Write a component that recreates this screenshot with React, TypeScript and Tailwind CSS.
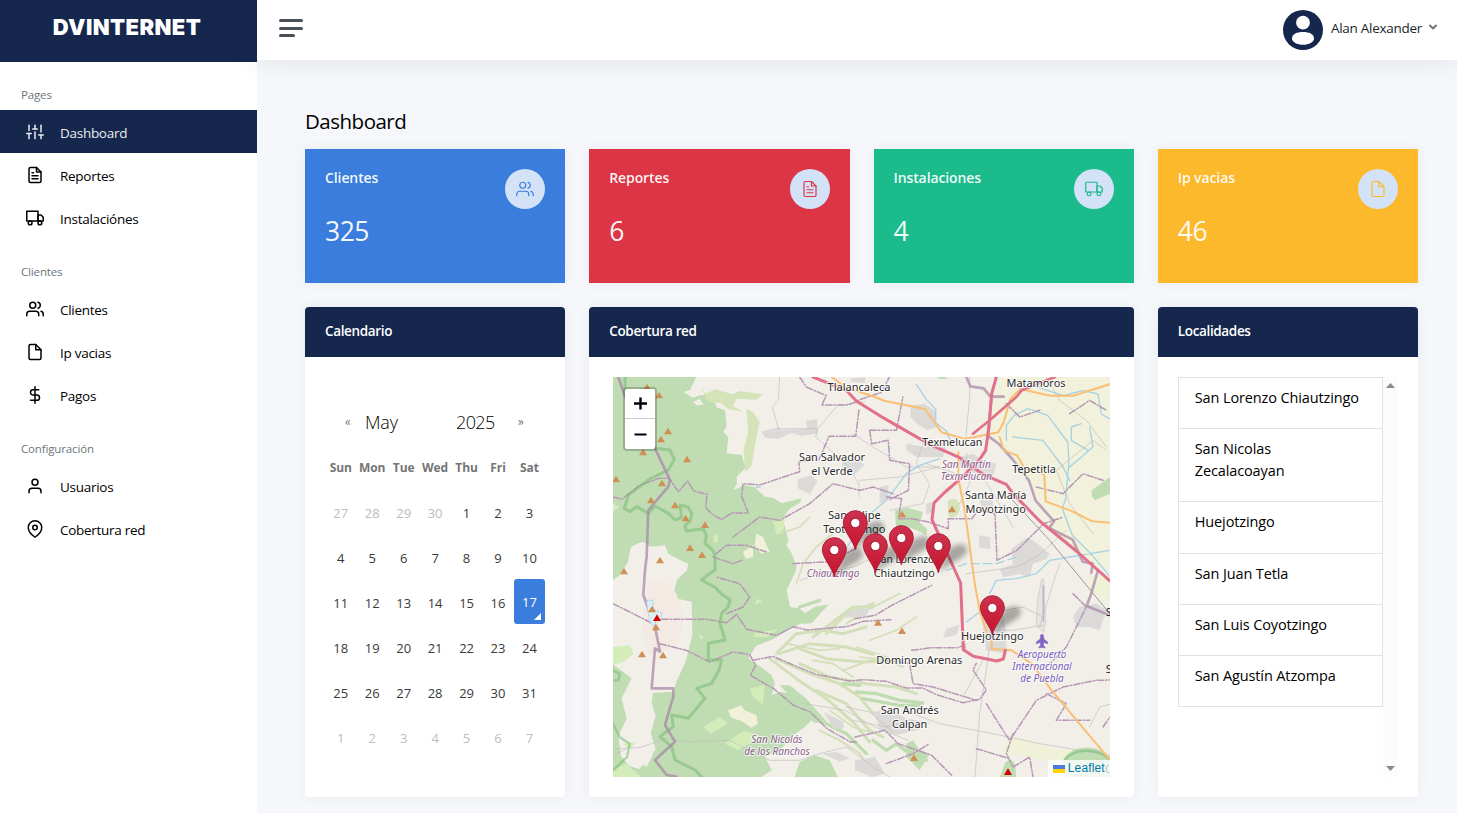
import type { ReactNode } from 'react';
import type { IconType } from 'react-icons';
import {
  FiChevronDown,
  FiDollarSign,
  FiFile,
  FiFileText,
  FiMapPin,
  FiSliders,
  FiTruck,
  FiUser,
  FiUsers,
} from 'react-icons/fi';

type NavItem = { label: string; icon: IconType; active?: boolean };

const NAV: { title: string; items: NavItem[] }[] = [
  {
    title: 'Pages',
    items: [
      { label: 'Dashboard', icon: FiSliders, active: true },
      { label: 'Reportes', icon: FiFileText },
      { label: 'Instalaciónes', icon: FiTruck },
    ],
  },
  {
    title: 'Clientes',
    items: [
      { label: 'Clientes', icon: FiUsers },
      { label: 'Ip vacias', icon: FiFile },
      { label: 'Pagos', icon: FiDollarSign },
    ],
  },
  {
    title: 'Configuración',
    items: [
      { label: 'Usuarios', icon: FiUser },
      { label: 'Cobertura red', icon: FiMapPin },
    ],
  },
];

const STATS = [
  { label: 'Clientes', value: '325', icon: FiUsers, bg: 'bg-[#3b7ddd]', fg: 'text-[#3b7ddd]' },
  { label: 'Reportes', value: '6', icon: FiFileText, bg: 'bg-[#dc3545]', fg: 'text-[#dc3545]' },
  { label: 'Instalaciones', value: '4', icon: FiTruck, bg: 'bg-[#1cbb8c]', fg: 'text-[#1cbb8c]' },
  { label: 'Ip vacias', value: '46', icon: FiFile, bg: 'bg-[#fcb92c]', fg: 'text-[#fcb92c]' },
];

const PLACES = [
  'San Lorenzo Chiautzingo',
  'San Nicolas Zecalacoayan',
  'Huejotzingo',
  'San Juan Tetla',
  'San Luis Coyotzingo',
  'San Agustín Atzompa',
];

const WEEKDAYS = ['Sun', 'Mon', 'Tue', 'Wed', 'Thu', 'Fri', 'Sat'];

const DAYS = Array.from({ length: 42 }, (_, i) => {
  const n = i - 3;
  if (n < 1) return { n: n + 30, out: true };
  if (n > 31) return { n: n - 31, out: true };
  return { n, out: false };
});

function Sidebar() {
  return (
    <aside className="flex w-[257px] shrink-0 flex-col bg-white">
      <div className="flex h-[62px] justify-center bg-[#15274d] pt-[13px] pr-[3px]">
        <span className="font-['Inter'] text-[22px] leading-[28px] font-black tracking-[0.4px] text-white">
          DVINTERNET
        </span>
      </div>
      {NAV.map((group) => (
        <nav key={group.title}>
          <div className="h-12 pt-[24px] pl-[21px] text-[11.5px] leading-[18px] tracking-[-0.15px] text-[#6c757d]">
            {group.title}
          </div>
          {group.items.map(({ label, icon: Icon, active }) => (
            <a
              key={label}
              className={
                active
                  ? 'flex h-[43px] items-center bg-[#15274d] pl-[26px] text-[#e9ecef]'
                  : 'flex h-[43px] items-center pl-[26px] text-black'
              }
            >
              <Icon className="size-[18px]" strokeWidth={2} />
              <span className="pt-[3px] pl-[16px] text-[13.5px] leading-5 tracking-[-0.28px]">{label}</span>
            </a>
          ))}
        </nav>
      ))}
    </aside>
  );
}

function TopBar() {
  return (
    <header className="relative flex h-[60px] shrink-0 items-center justify-between bg-white pr-[18px] pl-[22px] shadow-[0_0_28px_0_rgba(33,37,41,0.1)]">
      <div className="flex flex-col gap-[4.5px] pb-[4px]">
        <span className="h-[3px] w-6 rounded-sm bg-[#495057]" />
        <span className="h-[3px] w-6 rounded-sm bg-[#495057]" />
        <span className="h-[3px] w-4 rounded-sm bg-[#495057]" />
      </div>
      <div className="flex items-center">
        <svg className="size-10" viewBox="0 0 40 40">
          <circle cx="20" cy="20" r="20" fill="#15274d" />
          <circle cx="20" cy="12.7" r="6.9" fill="#fff" />
          <path d="M9 28.5C9 24 14 22 20 22s11 2 11 6.5C31 32 26 34.8 20 34.8S9 32 9 28.5Z" fill="#fff" />
        </svg>
        <span className="pb-[5px] pl-2 text-[13.5px] leading-5 tracking-[-0.28px] text-[#212529]">Alan Alexander</span>
        <FiChevronDown className="mb-[6px] ml-[5px] size-[12px] text-[#6c757d]" strokeWidth={4} />
      </div>
    </header>
  );
}

function Panel({ title, className, children }: { title: string; className: string; children: ReactNode }) {
  return (
    <section className={`flex h-[490px] flex-col rounded bg-white shadow-[0_0_14px_0_rgba(33,37,41,0.05)] ${className}`}>
      <h2 className="h-[50px] rounded-t bg-[#15274d] px-5 pt-[14px] text-[13.5px] leading-5 font-semibold tracking-[-0.35px] text-white">
        {title}
      </h2>
      {children}
    </section>
  );
}

function Calendar() {
  return (
    <div className="px-5 pt-[49px]">
      <div className="flex h-8 items-center text-[#212529]">
        <span className="w-10 pl-[20px] text-[13px] font-light">«</span>
        <span className="w-[91px] text-[18px] tracking-[-0.2px] font-light text-black">May</span>
        <span className="w-[62px] text-[18px] font-light tracking-[-0.6px] text-black">2025</span>
        <span className="text-[13px] font-light">»</span>
      </div>
      <div className="grid grid-cols-7 pt-[6px] text-center">
        {WEEKDAYS.map((d) => (
          <span key={d} className="h-[45px] text-[12px] leading-[47px] font-bold tracking-[-0.1px] text-[#757575]">
            {d}
          </span>
        ))}
        {DAYS.map(({ n, out }, i) =>
          n === 17 ? (
            <span key={i} className="relative h-[45px] rounded-[3px] bg-[#3b7ddd] text-[13px] leading-[46px] text-white">
              {n}
              <svg className="absolute right-1 bottom-1 size-[7px]" viewBox="0 0 7 7">
                <path d="M7 0v7H0z" fill="#fff" />
              </svg>
            </span>
          ) : (
            <span
              key={i}
              className={
                out
                  ? 'h-[45px] text-[13px] leading-[49px] text-[#bdbdbd]'
                  : 'h-[45px] text-[13px] leading-[49px] text-[#393939]'
              }
            >
              {n}
            </span>
          ),
        )}
      </div>
    </div>
  );
}

const PEAKS: [number, number][] = [
  [102, 30], [138, 54], [165, 162], [144, 186], [90, 225], [222, 246], [9, 306], [147, 318], [114, 369],
  [186, 384], [218, 423], [276, 443], [231, 512], [267, 533], [141, 549], [33, 582], [117, 696], [129, 750],
  [87, 831], [150, 834], [867, 411], [1017, 396], [795, 736], [867, 761], [903, 1142],
];

const LABELS: { t: string; x: number; y: number; w: number; kind?: 'area' | 'air' }[] = [
  { t: 'Tlalancaleca', x: 738, y: 42, w: 189 },
  { t: 'Matamoros', x: 1269, y: 30, w: 177 },
  { t: 'Texmelucan', x: 1018, y: 206, w: 180 },
  { t: 'San Salvador', x: 657, y: 251, w: 198 },
  { t: 'el Verde', x: 657, y: 293, w: 124 },
  { t: 'Tepetitla', x: 1263, y: 287, w: 131 },
  { t: 'San Martín', x: 1060, y: 273, w: 146, kind: 'area' },
  { t: 'Texmelucan', x: 1060, y: 308, w: 154, kind: 'area' },
  { t: 'Santa María', x: 1148, y: 366, w: 184 },
  { t: 'Moyotzingo', x: 1148, y: 408, w: 181 },
  { t: 'San Felipe', x: 724, y: 426, w: 158 },
  { t: 'Teotlalcingo', x: 724, y: 468, w: 187 },
  { t: 'San Lorenzo', x: 875, y: 558, w: 178 },
  { t: 'Chiautzingo', x: 874, y: 600, w: 184 },
  { t: 'Chiautzingo', x: 660, y: 600, w: 158, kind: 'area' },
  { t: 'Huejotzingo', x: 1138, y: 788, w: 188 },
  { t: 'Domingo Arenas', x: 919, y: 862, w: 258 },
  { t: 'San Andrés', x: 890, y: 1011, w: 174 },
  { t: 'Calpan', x: 890, y: 1053, w: 106 },
  { t: 'San Nicolás', x: 492, y: 1098, w: 154, kind: 'area' },
  { t: 'de los Ranchos', x: 492, y: 1134, w: 197, kind: 'area' },
  { t: 'Aeropuerto', x: 1287, y: 842, w: 146, kind: 'air' },
  { t: 'Internacional', x: 1287, y: 878, w: 178, kind: 'air' },
  { t: 'de Puebla', x: 1287, y: 914, w: 130, kind: 'air' },
];

const MARKERS: [number, number][] = [
  [727, 519], [865, 564], [787, 588], [976, 588], [664, 600], [1138, 774],
];

function Terrain() {
  return (
    <>
      <rect width="1491" height="1200" fill="#f2efe9" />
      {/* farmland in the east */}
      <path d="M1160 0h331v580l-25-12-42-5-47-64-70-35-11-35-26-40-10-55-35-55-55-75-40-20 5-60 10-70Z" fill="#f1f1dc" />
      <path d="M1430 595h61v80l-50-25-20-15ZM1180 1080l60 5 60 25 80 10 20 10-40 35-100-20-40-15-50 10Z" fill="#f0f1d9" />
      {/* forest */}
      <path
        d="M0 0H250L231 39L250 55L276 54L306 79L312 92L336 99L341 149L330 165L346 179L341 229L386 234L392 256L401 269L371 299L372 320L361 339L396 324L425 330L440 345L456 359L480 362L506 379L566 364L560 378L530 395L506 429L516 449L526 489L520 505L536 529L551 569L545 590L521 639L531 689L560 695L576 709L605 690L648 682L620 712L596 739L560 740L526 759L476 789L430 806L406 844L456 879L476 895L486 919L476 955L500 945L536 949L576 989L600 1025L576 1049L536 1079L500 1120L456 1139L476 1179L446 1200H0Z"
        fill="#c0dcb3"
      />
      <path d="M545 1200l15-45 45-20 45 15 25 50ZM500 925l30 0 50 40 40 45 30 35-50-10-60-70Z" fill="#c0dcb3" />
      {/* bare high slopes */}
      <path
        d="M92 494l20 15 44-4 10 25 36 20 24 10-4 20-30 28-8 30 12 28 40 8 2 100-20 80-28 60-8 30-62 4-4 30 12 40-15 50 15 48-20 30-30 30-30-10-24-30-8-60 25-50-15-62 30-60-20-15-40-30-32-40-4-30L0 640V610l20-15 24-38 10-48 22-10Z"
        fill="#f2efe9"
      />
      <path d="M66 1142l30-28 24 20-20 36Z" fill="#f2efe9" />
      <path d="M108 610c50-20 90 40 106 110-10 70-40 110-110 110-30-80-10-150 4-220Z" fill="#f2e6df" opacity=".6" />
      <path d="M212 45l30-10 20 18-22 10ZM240 75l20-10 12 18-20 2Z" fill="#f2efe9" />
      <path d="M266 34l12 16 30-14 50 16 22-10 70 10-20 16-60-3-10 22 30 18-46-10-20-16-40-5ZM400 95l20 10 20 30-14 70-10 60-20 20-4-70 14-50Z" fill="#d5e3b9" />
      <path d="M430 470l20 10 20 45-25 5-20-25ZM390 525l30-20 0 35-22 5ZM345 1000l40-15 10 15 35 15 5 25-20 12-30-20-30-10Z" fill="#f1f0d8" />
      <path d="M0 380l20 10-20 14ZM0 810l50-5 12 25-30 25-32 8ZM300 480l14-10 2 25-12 4ZM480 430l36-10-5 40-20 15ZM410 935l45-12-5 60-28-20ZM270 1050l50-30 25 18-50 32ZM335 1100l60-40 50 20-70 40ZM0 1180l40-20 45 40H0ZM425 770l70-15-30 25-45 0Z" fill="#d3ecba" />
      <path d="M30 1100l20 15 20-20ZM430 665l20 8-24 10ZM256 770l18 10-12 8Z" fill="#d3ecba" />
      {/* gullies fanning out from the volcano */}
      <g fill="none" stroke="#d3dfb8" strokeWidth="9" strokeLinecap="round" strokeLinejoin="round">
        <path d="M490 830l60-60 80-10 60 10 70-20M500 830l90-30 110 10 80 22M560 815l80 30 110 10 110-5M470 845l80 60 90 60 80 70 50 60M490 845l100 45 90 30 60 40 40 50M560 860l90 40 110 20 90 10 60 20M600 780l120-90 60 0M640 770l60-60 80-30M610 940l90 40 70 80 40 20" />
        <path d="M700 740l60-40 60-30 40-20M690 880l110-40 70 30M620 1060l60 30 60 40 30 40" strokeWidth="6" />
        <path d="M550 620l20-60 40-50 50-40M590 420l-30 30-60 20" strokeWidth="5" />
        <path d="M730 810l120 40M770 790l80-30 60-40M740 840l90 10M600 850l60 10 60 40M520 800l100 20 60-5M650 1000l70 50 50 15" strokeWidth="5" />
      </g>
      <g fill="none" stroke="#bfdcb1" strokeWidth="10" strokeLinecap="round">
        <path d="M730 945l60 5 70 20 70 8M750 965l110 20 60 0M780 1090l40 30 30-20 40 30 50 20M560 690l60-20M690 920l50 5M640 1040l60 30 60 60" />
      </g>
      {/* green patches */}
      <path d="M846 400l36-8 48 14-10 30 22 20-2 18-28-14-34-12-22 22-8-34ZM1436 340l55-40v50l-45 20-10-12ZM1350 1150c20-50 110-50 141-10v60h-120ZM1175 1160c10-16 26-16 32 6l2 34h-48ZM880 1100l20-10 20 30 30 10-30 50-40-40ZM975 0h26v6h-22Z" fill="#c0dcb3" />
      <path d="M1004 372c20-16 40 0 36 24s-24 30-34 20Z" fill="#d5e3b9" />
      {/* built-up areas */}
      <g fill="#dbdad8">
        <path d="M446 164l50-14 8 8 80-2-6-24 34-6 2 44-50 6-30-8-38 18-40-4ZM554 306l40-10 20 16-24 40-36-18ZM690 250l40-6 24 20-30 30-40-10ZM712 5l45-5v18l-40-3ZM894 85l40-5 30 20 8 50-30 10-30-20-20-20ZM880 200l60 10 60 0-10 30-80 0-30-20ZM1040 240l40-10 30 20 40 10-10 40-60-10-40-20ZM1100 370h40v20l-34 4ZM800 330l26-6v40l-26 16ZM940 380l16-6 6 30-22 10ZM1098 475l34 5v36l-34-4ZM1194 515l50-35 30 20 36 30-10 16-40 15-10 40-30-10-50 10-10-24 40-16Z" />
        <path d="M1000 755l40-12-10 30-40 10ZM1106 690l40-10 34 10-10 20 10 60 0 60-60-10-10-60ZM1400 690l50-10 30 20-20 60-30-10-40 0-10-30ZM780 1005l50-10 50 30 70 10-20 20-80 20-50-20-10-30ZM726 1150l60-10 30 50-40 10-50-20ZM632 1005l60 30 0 20-30 0ZM690 720l30-20 50-6-10 24-60 4ZM630 1130l40-6 40 20-30 10Z" />
      </g>
      <path d="M1270 726l4-60 12-60 6 0 6 130-6 30-22-20Z" fill="#e6e4e3" stroke="#c8c5c3" strokeWidth="2" />
      <path d="M1291 624v110" stroke="#bcb6d2" strokeWidth="5" />
    </>
  );
}

function Lines() {
  return (
    <g fill="none" strokeLinejoin="round" strokeLinecap="round">
      {/* water */}
      <g stroke="#a6d3e3" strokeWidth="4">
        <path d="M910 22l30 45 28 30 0 40 32 25 10 25M690 530l70-110 60-50 60-80 40-25 60-20M1180 190l0-45 24-30 40-20 60 20 60 80 4 60-10 110-10 30 30 80 60 60 50 60M1200 180l90 10 60 80 20 40M1260 26l90 30 60-15 45 10 10 60 26 15M1375 150l30-10M1430 150l10 60-70 60M1375 150l0 40 50 30M1130 650l20-40 60-5 60-15 40-40 60-10 120-20M1060 735l40-30" />
        <path d="M1000 580l60-20 90 0 60-20" strokeDasharray="26 12" />
        <path d="M430 330h12" />
      </g>
      {/* minor roads and rail */}
      <g stroke="#bfbebc" strokeWidth="2">
        <path d="M500 0l-4 70-18 20 18 65h118l-6 25 90 80 40 60 0 40M614 155l60-70 80-10M720 170l60 40 100 60 100 0M1070 0l0 60-12 130M740 310l120-10 120-30M930 200l-20 60 40 60-20 60-100 20M940 260l90 30 80 10 90 150M1060 230l10 90-30 60M1300 0l40 70 80 60 60 80M1440 470l-70-90-40-100 110-90 40 30M560 610l60-20 100-20 90-40M1060 590l150-20 60-30 90-80M1340 560l-20 60-40 130" />
        <path d="M1120 710l110-20 60 30M1140 760l60 0 90-15M1130 810l-30 200-14 190M900 1010l80 30 160 30 140 30 211 35M720 1030l100 20 80-20M1050 960l60-110M1430 1050l30-60 31-8" />
        <path d="M0 1115l80-3 80-28 60 10 130-4 60 30 60 30 90 0 60-20 80-20 80 60 51 30M700 990l70 15 70 60M0 1135l40-20M576 980l120 20 90 50 100 40" />
      </g>
      <path d="M1190 360l120 130 180 220" stroke="#999" strokeWidth="3" />
      {/* municipal boundaries */}
      <g stroke="#b697b4" strokeWidth="4.5" strokeDasharray="20 6 4 6">
        <path d="M0 360l28 6 50-40 60-22 30 0 28 40 28-32 18 30 40 10-4 40 20 20 28 16 30-20 50 0-20-50 4-38 50 4 120-40-2-30 60-6 30-70 80 0 10-80M560 0l20 30 60 26-14 28 80 0 40-18 60-20 30-60M360 480l40-30 40-30 60 10 90-50 70-60 80 20 40-10 60 20M540 560l110-6 80-40M310 530l30-25 60 0 60 20M300 540l60 20 26-10M820 360l46 5-10 60 40 0 50 10 60 20 0-30 70 0 20-25 50 10 6 140 60-30 80-80 60-20" />
        <path d="M770 160l80 0 20-100M770 160l6 40 50-10 4 60 60 10-4 80-60 30M1180 80l40 40 60-20M1370 110l60-40 50 30M1270 330l80 20 60-60 60 20" />
        <path d="M0 680l120 60M145 727l136 0 60 10 30-25 30 45 90 18 50-26 40 10 120-10 50-16 82-5M140 800l80 20 70 35 70-30 50 8 18 32-16 30 70 40 60 50 50 20 50 50 70 40 20 0M420 850l60-12 70 30 60 24 100 20 40-4 70 5 60 20 50 0 40 20 80 24 50-10 20-28-40-60 10-20M340 710l50-20 20-30-30-40-70-20M896 820l60-8 80 0 20-10 0 20" />
        <path d="M726 725l60-10 50-30 60-30 60-30M820 850l70 10 10 60 60 10 130 40M1120 980l50 80 20 30 80-120 20-10 60-30 100-20 90-2M1200 1070l-20 60 20 40 50-30 10 60M1090 1115l100 30M1300 950l60 30-30 50 100 0M1470 1050l21-30M1380 650l40 40-60 120-60 60M820 1160l80-30 50-30M726 1080l90-20 40 40 100 35 60 60" />
      </g>
      {/* park outline */}
      <g stroke="#6fb76b" strokeOpacity=".5">
        <path
          d="M36 0V40M126 214L171 219L184 247L166 279L110 306L86 324L46 354L34 394L51 404L71 389L106 409L126 387L166 409L186 429L206 422L201 384L225 390L236 409L232 432L216 446L220 462L271 455L280 475L276 499L300 520L306 539L306 579L296 585L266 609L306 631L325 650L351 669L345 690L326 709L321 739L336 789L286 799L286 849L326 849L318 880L296 919L251 934L276 964L226 1024L176 1014L181 1049L141 1079L176 1109L186 1149L246 1179L266 1200"
          strokeWidth="9"
        />
        <path d="M0 1040l20 40 30 20-8 40-42 40M0 880l20 10-4 20-16 0M1350 1160c20-50 110-50 141-10" strokeWidth="7" />
      </g>
      {/* state boundaries */}
      <g stroke="#a88aa8" strokeWidth="8" strokeOpacity=".75">
        <path d="M16 0L36 59L126 214L171 309L166 329L106 399L101 539L96 579L91 654L126 749L141 824L126 814L116 934L181 934L181 959L156 1044L186 1094L126 1149L161 1194L191 1199" />
        <path d="M1060 0l12 28 40 6 20 25 40 0M1136 56l-12 120 34 25 40 45 50 65 20 60 55 62-14 20 70 35 30 66 30 5-4 28M1455 579l-20 70-14 38 70 28" />
      </g>
      {/* secondary roads */}
      <g stroke="#f9bf72" strokeWidth="6">
        <path d="M656 0l40 30 90 30 30 12 120 24 50 70 70 20 100-20 16-30 20-70 30-30 90 20 70 0 110-35M1036 225l0 80 20 100 30 220 15 80 20 60M1136 816l60 4 60 40 60 80 100 120 85 100M1136 790v26M1160 180l12 40 40 15 22 38 60 20 4 80 80 30 60 30 60 5" />
      </g>
      {/* motorways */}
      <g stroke="#e2708a" strokeWidth="9">
        <path d="M600 0l100 40 30 32 80 50 140 80 90 40 70 50 70 30 20 28 80 82 110 90 101 90M1150 0l-14 50-8 100-10 70-20 30-50 50-55 48-30 30-6 50 36 80 50 110 8 200 30 20 70 14 20-6 6-26" />
        <path d="M1080 170l50-40 80-70 16-20 100-40" strokeWidth="8" />
      </g>
    </g>
  );
}

function CoverageMap() {
  return (
    <div className="relative mx-6 mt-5 h-[400px] overflow-hidden bg-[#f2efe9]">
      <svg className="block h-[400px] w-[497px]" viewBox="0 0 1491 1200">
        <defs>
          <linearGradient id="pin" x1="0" y1="0" x2="0" y2="1">
            <stop offset="0" stopColor="#ce3350" />
            <stop offset="1" stopColor="#c5132b" />
          </linearGradient>
          <filter id="soft" x="-30%" y="-30%" width="160%" height="160%">
            <feGaussianBlur stdDeviation="8" />
          </filter>
        </defs>
        <Terrain />
        <Lines />
        <path d="M100 672l18-4 4 30 24 10-2 20-16 4-4 20-14-20Z" fill="#dceef2" stroke="#9ccbee" strokeWidth="3" strokeDasharray="6 4" />
        {PEAKS.map(([x, y]) => (
          <path key={`${x}-${y}`} d={`M${x} ${y - 10}l12 20h-24z`} fill="#d08f55" />
        ))}
        <path d="M132 712l12 20h-24zM1185 1174l12 20h-24z" fill="#d40000" />
        <path d="M1287 772c4 0 5 5 5 10v4l12 9v5l-12-4-1 10 5 4v3l-9-2-9 2v-3l5-4-1-10-12 4v-5l12-9v-4c0-5 1-10 5-10Z" fill="#8461c4" stroke="#8461c4" strokeWidth="2" />
        {LABELS.map(({ t, x, y, w, kind }) => (
          <text
            key={`${t}-${y}-${x}`}
            x={x}
            y={y}
            textAnchor="middle"
            textLength={w}
            lengthAdjust="spacingAndGlyphs"
            fontFamily="'Noto Sans', sans-serif"
            fontSize={kind ? 31 : 34}
            fontStyle={kind ? 'italic' : 'normal'}
            fill={kind === 'area' ? '#8d618b' : kind === 'air' ? '#7a5cbf' : '#2a2a2a'}
            stroke="#fff"
            strokeOpacity={kind ? 0.6 : 0.75}
            strokeWidth="7"
            strokeLinejoin="round"
            paintOrder="stroke"
          >
            {t}
          </text>
        ))}
        <text x="1478" y="716" fontFamily="'Noto Sans', sans-serif" fontSize="34" fill="#2a2a2a">S</text>
        <text x="1478" y="888" fontFamily="'Noto Sans', sans-serif" fontSize="34" fill="#2a2a2a">S</text>
        {MARKERS.map(([x, y]) => (
          <path
            key={`s${x}`}
            d={`M${x} ${y}l26-64c24-30 62-28 60-4s-48 34-86 68z`}
            fill="#000"
            opacity=".3"
            filter="url(#soft)"
          />
        ))}
        {MARKERS.map(([x, y]) => (
          <g key={`m${x}`} transform={`translate(${x} ${y})`}>
            <path
              d="M0-1C-4-24-36-58-36-82a36 36 0 0 1 72 0C36-58 4-24 0-1Z"
              fill="url(#pin)"
              stroke="#b01c35"
              strokeWidth="3"
            />
            <circle cy="-81" r="14" fill="#fff" stroke="#a81b33" strokeWidth="3" />
          </g>
        ))}
      </svg>
      <div className="absolute top-[10px] left-[10px] w-[34px] rounded border-2 border-black/20 bg-clip-padding">
        <div className="flex h-[30px] items-center justify-center rounded-t-[2px] border-b border-[#ccc] bg-white">
          <svg className="size-[13px]" viewBox="0 0 13 13">
            <path d="M0 6.500h13M6.500 0.500v12" stroke="#000" strokeWidth="2.400" />
          </svg>
        </div>
        <div className="flex h-[30px] items-center justify-center rounded-b-[2px] bg-white">
          <svg className="size-[13px]" viewBox="0 0 13 13">
            <path d="M0.500 6.500h12" stroke="#000" strokeWidth="2" />
          </svg>
        </div>
      </div>
      <div className="absolute right-0 bottom-0 flex h-[17px] w-[62px] items-center overflow-hidden bg-white/80 pl-[5px] font-['Liberation_Sans'] text-[12px] leading-4 whitespace-nowrap text-[#0078a8]">
        <svg className="mr-[3px] h-2 w-3 shrink-0" viewBox="0 0 12 8">
          <path fill="#4c7be1" d="M0 0h12v4H0z" />
          <path fill="#ffd500" d="M0 4h12v4H0z" />
        </svg>
        <span className="-mt-0.5 tracking-[0.15px]">Leaflet</span>
        <svg className="h-3 w-1 shrink-0" viewBox="0 0 4 12">
          <circle cx="5" cy="6" r="4" fill="none" stroke="#bbb" />
        </svg>
      </div>
    </div>
  );
}

function Places() {
  return (
    <div className="mx-5 mt-5 flex h-[400px]">
      <ul className="w-[205px]">
        {PLACES.map((p, i) => (
          <li
            key={p}
            className={`border-x border-b border-[#dee2e6] pt-[9px] pr-[22px] pb-[19.5px] pl-4 text-[14.5px] leading-[21.75px] tracking-[-0.12px] text-black ${i === 0 ? 'border-t' : ''}`}
          >
            <span className={i === 1 ? 'block w-[120px]' : 'block whitespace-nowrap'}>{p}</span>
          </li>
        ))}
      </ul>
      <div className="flex w-[15px] flex-col items-center justify-between bg-[#fcfcfc] py-[6px]">
        <svg className="h-[5px] w-[9px]" viewBox="0 0 9 5">
          <path d="M4.500 0L9 5H0z" fill="#8b8b8b" />
        </svg>
        <svg className="h-[5px] w-[9px]" viewBox="0 0 9 5">
          <path d="M0 0h9L4.500 5z" fill="#8b8b8b" />
        </svg>
      </div>
    </div>
  );
}

export default function App() {
  return (
    <div className="flex h-[813px] w-full overflow-hidden bg-[#f5f7fb] font-['Open_Sans',sans-serif]">
      <Sidebar />
      <div className="flex min-w-0 flex-1 flex-col">
        <TopBar />
        <main className="pr-[39px] pl-12">
          <h1 className="pt-[46px] pb-[13px] text-[20.5px] leading-[30px] tracking-[-0.5px] text-black">Dashboard</h1>
          <div className="grid grid-cols-4 gap-6">
            {STATS.map(({ label, value, icon: Icon, bg, fg }) => (
              <section
                key={label}
                className={`flex h-[134px] justify-between p-5 shadow-[0_0_14px_0_rgba(33,37,41,0.05)] ${bg}`}
              >
                <div>
                  <h3 className="-mt-[2px] text-[14px] leading-[22px] font-semibold tracking-[-0.1px] text-white/95">{label}</h3>
                  <p className="mt-[23px] text-[26.5px] leading-[38px] tracking-[-0.5px] text-white/95">{value}</p>
                </div>
                <span className={`flex size-10 items-center justify-center rounded-full bg-[#d3e2f7] ${fg}`}>
                  <Icon className="size-[18px]" strokeWidth={1.6} />
                </span>
              </section>
            ))}
            <Panel title="Calendario" className="col-span-1">
              <Calendar />
            </Panel>
            <Panel title="Cobertura red" className="col-span-2">
              <CoverageMap />
            </Panel>
            <Panel title="Localidades" className="col-span-1">
              <Places />
            </Panel>
          </div>
        </main>
      </div>
    </div>
  );
}
